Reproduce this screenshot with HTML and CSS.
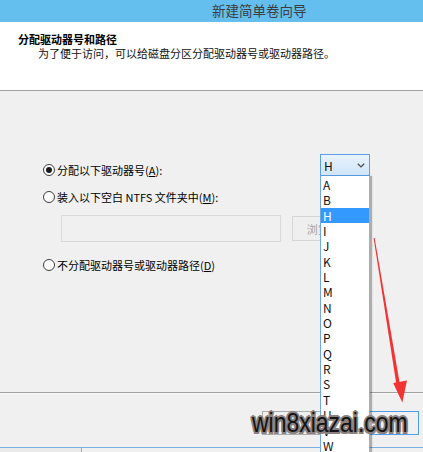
FILE: index.html
```html
<!DOCTYPE html>
<html lang="zh-CN">
<head>
<meta charset="utf-8">
<title>新建简单卷向导</title>
<link rel="stylesheet" href="styles.css">
</head>
<body>
<div class="window">
  <div class="titlebar">新建简单卷向导</div>
  <div class="header">
    <div class="h-title">分配驱动器号和路径</div>
    <div class="h-sub">为了便于访问，可以给磁盘分区分配驱动器号或驱动器路径。</div>
  </div>
  <div class="content">
    <div class="row row1">
      <label class="opt"><span class="radio checked"></span>分配以下驱动器号(<u>A</u>):</label>
      <div class="combo"><span>H</span><svg class="chev" width="8" height="5" viewBox="0 0 8 5"><path d="M0.8 0.8 L4 3.9 L7.2 0.8" fill="none" stroke="#505050" stroke-width="1.4"/></svg></div>
    </div>
    <div class="row row2">
      <label class="opt"><span class="radio"></span>装入以下空白 NTFS 文件夹中(<u>M</u>):</label>
    </div>
    <div class="row row-path">
      <div class="textbox"></div>
      <div class="btn browse">浏览(R)...</div>
    </div>
    <div class="row row3">
      <label class="opt"><span class="radio"></span>不分配驱动器号或驱动器路径(<u>D</u>)</label>
    </div>
  </div>
  <div class="footer">
    <div class="btn fbtn"></div>
    <div class="btn fbtn focus"></div>
  </div>
  <div class="taskbar"><div class="tb-cell"></div><div class="tb-rest"></div></div>

  <ul class="droplist">
    <li>A</li><li>B</li><li class="sel">H</li><li>I</li><li>J</li><li>K</li><li>L</li><li>M</li><li>N</li><li>O</li><li>P</li><li>Q</li><li>R</li><li>S</li><li>T</li><li>U</li><li>V</li><li>W</li>
  </ul>

  <svg class="arrow" width="423" height="452" viewBox="0 0 423 452">
    <polygon points="373.6,238 374.6,238 400.2,386 396.6,386" fill="#f23333"/>
    <polygon points="393.2,383 407,380.5 402.3,402.5" fill="#f23333"/>
  </svg>

  <div class="watermark">win8xiazai.com</div>
</div>
</body>
</html>
```
FILE: styles.css
```css
* { box-sizing: border-box; }
html, body { margin: 0; padding: 0; }
body {
  width: 423px;
  height: 452px;
  overflow: hidden;
  background: #f0f0f0;
  font-family: "Noto Sans CJK SC", "Noto Sans", sans-serif;
  font-size: 11px;
  color: #000;
}
.window {
  position: relative;
  width: 423px;
  height: 452px;
  overflow: hidden;
  display: flex;
  flex-direction: column;
}
.titlebar {
  height: 22px;
  flex: none;
  background: #65bfee;
  color: #3d3d3d;
  font-size: 13.5px;
  line-height: 20px;
  padding-left: 212px;
  white-space: nowrap;
}
.header {
  height: 69px;
  flex: none;
  background: #fff;
  border-bottom: 1px solid #a0a0a0;
  padding: 11px 0 0 18px;
}
.h-title {
  font-weight: bold;
  line-height: 13px;
  font-size: 11px;
}
.h-sub {
  line-height: 14px;
  padding-left: 20px;
  color: #111;
}
.content {
  height: 302px;
  flex: none;
  padding: 63px 53px 0 43px;
  border-bottom: 1px solid #a0a0a0;
}
.row { display: flex; }
.row1 { justify-content: space-between; align-items: flex-end; }
.row1 .opt { margin-bottom: -1px; }
.row2 { margin-top: 14px; }
.row-path { margin-top: 11px; padding-left: 18px; align-items: flex-start; }
.row3 { margin-top: 16px; }
.opt {
  display: flex;
  align-items: center;
  line-height: 14px;
  height: 14px;
  white-space: nowrap;
}
.opt u { text-decoration: underline; text-underline-offset: 1px; }
.radio {
  width: 12px;
  height: 12px;
  border: 1px solid #3c3c3c;
  border-radius: 50%;
  background: #fff;
  margin-right: 2px;
  display: flex;
  align-items: center;
  justify-content: center;
  flex: none;
}
.radio.checked::after {
  content: "";
  width: 6px;
  height: 6px;
  border-radius: 50%;
  background: #1a1a1a;
}
.combo {
  width: 50px;
  height: 22px;
  border: 1px solid #5aa0e6;
  background: linear-gradient(#e9f3fc, #cfe5f9);
  display: flex;
  align-items: center;
  justify-content: space-between;
  padding: 0 4px 0 3px;
  font-size: 12px;
  color: #111;
}
.chev { margin-top: 1px; }
.textbox {
  width: 220px;
  height: 27px;
  border: 1px solid #d9d9d9;
  background: #f0f0f0;
}
.btn {
  height: 25px;
  border: 1px solid #d5d5d5;
  background: #efefef;
  display: flex;
  align-items: center;
  justify-content: center;
  color: #a3a3a3;
  white-space: nowrap;
}
.browse { width: 75px; margin-left: 11px; margin-top: 1px; }
.footer {
  height: 54px;
  flex: none;
  border-top: 1px solid #fafafa;
  display: flex;
  justify-content: flex-end;
  gap: 7px;
  padding: 17px 4px 0 0;
}
.fbtn { width: 75px; height: 24px; border-color: #adadad; background: #f0f0f0; }
.fbtn.focus { border-color: #4f9de8; }
.taskbar {
  flex: 1;
  border-top: 1px solid #79afe3;
  display: flex;
}
.tb-cell { width: 82px; border-right: 1px solid #a9a9a9; background: #eaeaea; }
.tb-rest { flex: 1; background: #f0f0f0; }

.droplist {
  position: absolute;
  left: 320px;
  top: 176px;
  width: 50px;
  height: 290px;
  margin: 0;
  padding: 1px 0 0 0;
  list-style: none;
  background: #fff;
  border-left: 1px solid #6fa9e2;
  border-right: 1px solid #8db5dc;
  box-shadow: 2px 0 1px rgba(0,0,0,0.28);
  font-size: 12px;
}
.droplist li {
  height: 15.35px;
  line-height: 15.35px;
  padding-left: 2px;
  color: #111;
}
.droplist li.sel { background: #3399ff; color: #fff; }

.arrow { position: absolute; left: 0; top: 0; pointer-events: none; }

.watermark {
  position: absolute;
  left: 252px;
  top: 409px;
  font-family: "Liberation Sans", Arial, sans-serif;
  font-size: 28px;
  line-height: 28px;
  color: #141414;
  white-space: nowrap;
  transform: scaleX(0.82);
  transform-origin: 0 50%;
  text-shadow:
    -2px 0 0 #8a8282, 2px 0 0 #8a8282, 0 -2px 0 #8a8282, 0 2px 0 #8a8282,
    -1.5px -1.5px 0 #8a8282, 1.5px -1.5px 0 #8a8282, -1.5px 1.5px 0 #8a8282, 1.5px 1.5px 0 #8a8282;
}
```
